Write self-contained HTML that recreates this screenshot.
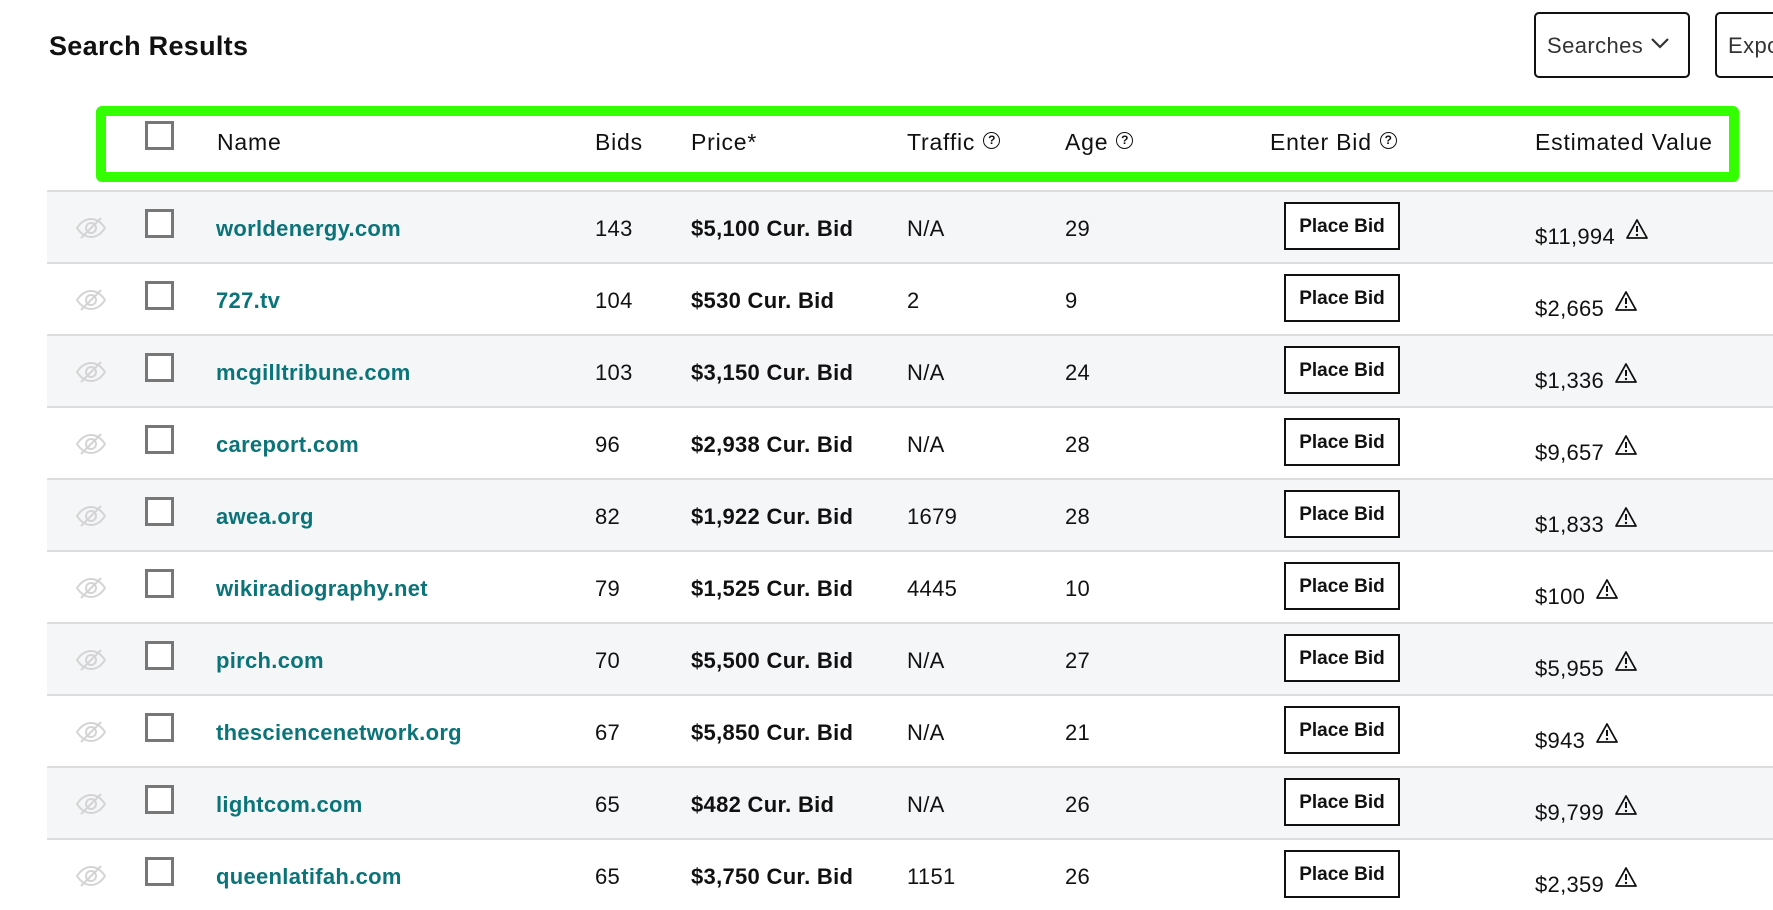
<!DOCTYPE html>
<html><head><meta charset="utf-8"><style>
*{margin:0;padding:0;box-sizing:border-box}
body{width:1773px;height:893px;overflow:hidden;background:#fff;font-family:"Liberation Sans",sans-serif;color:#111;position:relative}
h1{position:absolute;left:49px;top:31px;font-size:27px;font-weight:bold;color:#111;letter-spacing:0.3px}
.btn{position:absolute;top:12px;height:66px;border:2.5px solid #111;border-radius:5px;font-size:22px;color:#333;padding-left:11px;line-height:63px;background:#fff;letter-spacing:0.4px}
.green{position:absolute;left:96px;top:106px;width:1643px;height:76px;border:10px solid #33ff00;border-radius:6px}
.hd{position:absolute;top:129px;font-size:23px;color:#111;letter-spacing:0.8px}
.q{display:inline-block;width:17px;height:17px;border:1.6px solid #111;border-radius:50%;font-size:12px;line-height:14px;text-align:center;vertical-align:6px;margin-left:8px;font-weight:bold;letter-spacing:0}
.row{position:absolute;left:47px;width:1726px;height:72px;border-top:2px solid #ddd}
.row.g{background:#f5f6f8}
.cb{position:absolute;left:98px;top:17px;width:29px;height:29px;border:3px solid #777;background:#fff}
.hcb{position:absolute;left:145px;top:121px;width:29px;height:29px;border:3px solid #777}
.t{position:absolute;top:24px;font-size:22px;color:#111;letter-spacing:0.3px}
.nm{color:#0b7479;font-weight:bold}
.pr{font-weight:bold}
.pb{position:absolute;left:1237px;top:10px;width:116px;height:48px;border:2.5px solid #111;background:#fff;font-size:19px;font-weight:bold;text-align:center;line-height:45px}
.eye{position:absolute;left:28px;top:24px}
</style></head><body>
<h1>Search Results</h1>
<div class="btn" style="left:1534px;width:156px">Searches <svg width="20" height="12" viewBox="0 0 20 12" style="vertical-align:4px"><path d="M2 2l8 8 8-8" fill="none" stroke="#333" stroke-width="2.2"/></svg></div>
<div class="btn" style="left:1715px;width:100px">Expo</div>
<div class="green"></div>
<div class="hcb"></div>
<div class="hd" style="left:217px">Name</div>
<div class="hd" style="left:595px">Bids</div>
<div class="hd" style="left:691px">Price*</div>
<div class="hd" style="left:907px">Traffic<span class="q">?</span></div>
<div class="hd" style="left:1065px">Age<span class="q">?</span></div>
<div class="hd" style="left:1270px">Enter Bid<span class="q">?</span></div>
<div class="hd" style="left:1535px">Estimated Value</div>
<div id="rows"></div>
<script>
var d=[["worldenergy.com",143,"$5,100","N/A",29,"$11,994"],["727.tv",104,"$530","2",9,"$2,665"],["mcgilltribune.com",103,"$3,150","N/A",24,"$1,336"],["careport.com",96,"$2,938","N/A",28,"$9,657"],["awea.org",82,"$1,922","1679",28,"$1,833"],["wikiradiography.net",79,"$1,525","4445",10,"$100"],["pirch.com",70,"$5,500","N/A",27,"$5,955"],["thesciencenetwork.org",67,"$5,850","N/A",21,"$943"],["lightcom.com",65,"$482","N/A",26,"$9,799"],["queenlatifah.com",65,"$3,750","1151",26,"$2,359"]];
var h="";
var eye='<svg class="eye" width="32" height="24" viewBox="0 0 32 24"><path d="M2 12c4-6 9-9 14-9s10 3 14 9c-4 6-9 9-14 9S6 18 2 12z" fill="none" stroke="#d4d4d4" stroke-width="2"/><circle cx="16" cy="12" r="5" fill="none" stroke="#d4d4d4" stroke-width="2"/><path d="M6 22L26 2" stroke="#d4d4d4" stroke-width="2"/></svg>';
var warn='<svg width="24" height="22" viewBox="0 0 24 22" style="margin-left:10px;vertical-align:4px"><path d="M12 2L22 20H2z" fill="none" stroke="#111" stroke-width="1.8" stroke-linejoin="round"/><path d="M12 8v6" stroke="#111" stroke-width="2"/><circle cx="12" cy="17" r="1.2" fill="#111"/></svg>';
for(var i=0;i<d.length;i++){var r=d[i];
h+='<div class="row'+(i%2==0?' g':'')+'" style="top:'+(190+i*72)+'px">'+eye+'<div class="cb"></div>'+
'<div class="t nm" style="left:169px">'+r[0]+'</div><div class="t" style="left:548px">'+r[1]+'</div>'+
'<div class="t pr" style="left:644px">'+r[2]+' Cur. Bid</div><div class="t" style="left:860px">'+r[3]+'</div>'+
'<div class="t" style="left:1018px">'+r[4]+'</div><div class="pb">Place Bid</div>'+
'<div class="t" style="left:1488px;top:26px">'+r[5]+warn+'</div></div>';}
document.getElementById("rows").innerHTML=h;
</script>
</body></html>
